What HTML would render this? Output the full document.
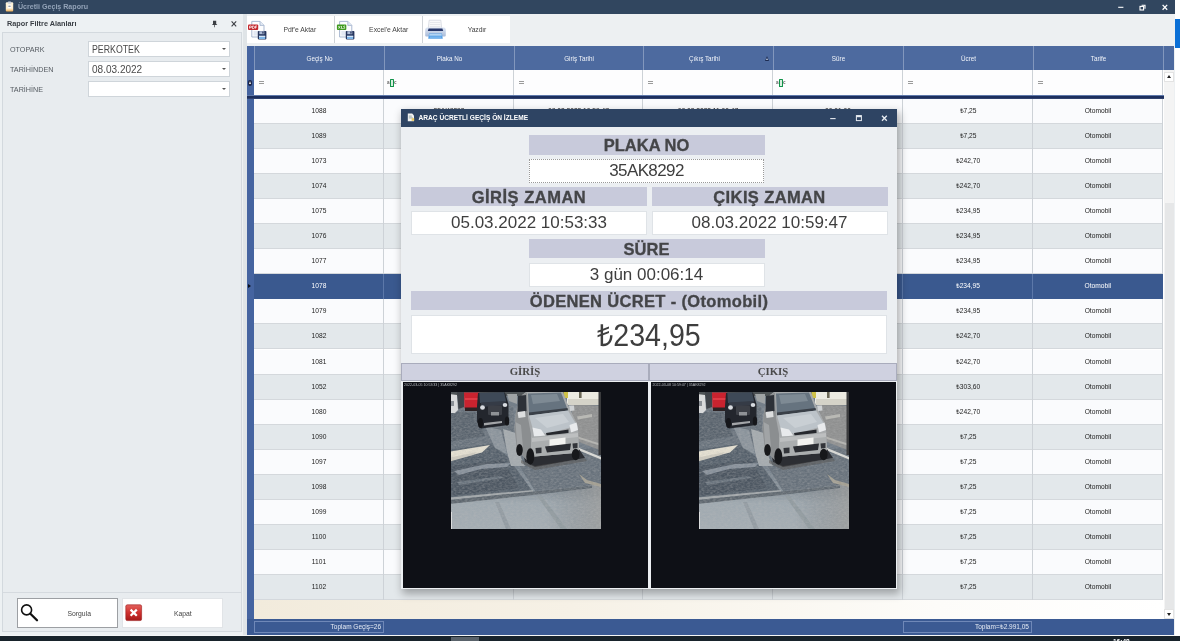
<!DOCTYPE html>
<html><head><meta charset="utf-8"><title>Ücretli Geçiş Raporu</title>
<style>
*{box-sizing:border-box;margin:0;padding:0}
html,body{width:1180px;height:641px;overflow:hidden;background:#fff;font-family:"Liberation Sans",sans-serif;}
body{position:relative;filter:contrast(1)}
.abs{position:absolute}
#win{z-index:0;position:absolute;left:0;top:0;width:1174.6px;height:635.700px;background:#edf0f2;overflow:hidden;border-bottom:1px solid #f4f6f7}
#title{position:absolute;left:0;top:0;width:1175px;height:14px;background:#31465f}
#title .t{position:absolute;left:17.8px;top:2px;font-size:8px;line-height:9px;font-weight:bold;color:#93a3b8;white-space:nowrap;transform:scaleX(.885);transform-origin:0 0}
#rstrip{position:absolute;left:1175px;top:0;width:5px;height:641px;background:#fff}
#rblue{position:absolute;left:1175px;top:19px;width:5px;height:29.300px;background:#0a6fd6}
#taskbar{position:absolute;left:0;top:635.700px;width:1180px;height:6px;background:#18232b;z-index:5}
#taskbar i{position:absolute;left:451px;top:1.2px;width:27.600px;height:5px;background:#59626a}
#taskbar b{position:absolute;left:1113px;top:3.700px;font-size:6.500px;color:#fff;line-height:6px}
/* left panel */
#lp{position:absolute;left:0;top:14px;width:243px;height:621px;background:#edf1f3}
#lp .hd{position:absolute;left:7px;top:5px;font-size:7.3px;font-weight:bold;color:#3a3f45;white-space:nowrap}
#lpin{position:absolute;left:2px;top:17.8px;width:240px;height:600px;background:#e8ecef;border:1px solid #d3d9de}
.lbl{position:absolute;left:10px;font-size:7.2px;color:#555b61;letter-spacing:0;white-space:nowrap}

.cmb span{display:inline-block;transform-origin:0 50%}
.cmb{position:absolute;left:88px;width:142px;height:16px;background:#fff;border:1px solid #cfd5da;font-size:10.5px;color:#4a4a4a;padding-left:3px;line-height:14px;white-space:nowrap}
.cmb:after{content:"";position:absolute;right:3px;top:6px;border:2px solid transparent;border-top:2.5px solid #555;}
#split{position:absolute;left:243px;top:14px;width:4.200px;height:621px;background:#dfe4e7}
/* toolbar */
#tb{position:absolute;left:247px;top:14px;width:928px;height:32px;background:#edf0f2}
.tbtn{position:absolute;top:1.900px;height:27.200px;background:#fff;font-size:6.8px;color:#444;white-space:nowrap}
.tbtn span{position:absolute;top:10px}
/* grid */
#grid{position:absolute;left:247px;top:46px;width:927px;height:588.700px;background:#fff;overflow:hidden}
.ghead{position:absolute;left:0;top:0;width:927px;height:24px;background:#4d6a9f}
.hc{position:absolute;top:0;height:24px;line-height:25px;text-align:center;color:#f1f4f9;font-size:6.300px;border-left:1px solid #8297bd;white-space:nowrap}
.frow{position:absolute;left:7px;top:24px;width:909px;height:25px;background:#fdfdfe}
.eq{position:absolute;top:35.2px;width:5.6px;height:3.2px;border-top:1.1px solid #9b9b9b;border-bottom:1.1px solid #9b9b9b}
.grn{position:absolute;top:33.3px;width:10px;height:7.4px;white-space:nowrap;font-size:0}
.grn i{display:inline-block;vertical-align:top;font-style:normal;font-size:4.6px;line-height:7.4px;color:#666;width:2.5px;text-align:center;font-weight:bold}
.grn b{display:inline-block;vertical-align:top;width:4.600px;height:7.400px;background:#d9efe0;border:1.700px solid #12934a;border-radius:.6px}
.darkline{z-index:2;position:absolute;left:0;top:49px;width:917px;height:3.5px;background:linear-gradient(#5e78aa 0,#5e78aa 30%,#1d2f5e 30%,#1d2f5e 85%,#8a9cc0 100%)}
.row{position:absolute;left:7px;width:909px;height:25.1px;background:#fafbfd;border-bottom:1px solid #d4d8dc;font-size:6.65px;color:#222}
.row.alt{background:#e3e8eb}
.row.sel{background:#3a598f;color:#fff;border-bottom-color:#3a598f;z-index:1}
.row.sel .c+.c{border-left:1px solid #5c78a9;margin-left:-.7px}
.row .c{position:absolute;top:0;height:25px;line-height:24.600px;text-align:center;white-space:nowrap}
.vl{position:absolute;top:24px;width:1px;height:530px;background:#cdd2d7}
.indic{position:absolute;left:0;top:0;width:7px;height:589px;background:#4564a0}
/* footer etc */
#cream{position:absolute;left:7px;top:554px;width:909px;height:19.5px;background:linear-gradient(90deg,#f2ebdc 0,#f6f1e6 35%,#fdfcf9 75%,#fff 100%)}
#foot{position:absolute;left:0;top:573.2px;width:927px;height:15.500px;background:#3b5a93}
.fbox{position:absolute;top:2px;height:12px;border:1px solid #6f88b8;color:#e6ecf5;font-size:6.5px;line-height:10px;text-align:right;padding-right:2px;white-space:nowrap}
#sb{position:absolute;left:917px;top:24px;width:10px;height:549.5px;background:#f4f4f4}
#sb .thumb{position:absolute;left:1px;top:133px;width:9px;height:405.500px;background:#e6e7e8}
#sb .up,#sb .dn{position:absolute;left:0;width:10px;height:10px;background:#fff;border:1px solid #e3e3e3}
#sb .up{top:1.800px}#sb .dn{top:539px}
#sb .up:after{content:"";position:absolute;left:2px;top:0px;border:2.5px solid transparent;border-bottom:3px solid #222}
#sb .dn:after{content:"";position:absolute;left:2px;top:3px;border:2.5px solid transparent;border-top:3px solid #222}
/* bottom-left buttons */
#lsep{position:absolute;left:3px;top:591.5px;width:238px;height:1px;background:#d5dadf}
.bbtn{position:absolute;top:598.3px;height:29.500px;width:101px;background:#fff;border:1px solid #e1e4e7;font-size:6.800px;color:#444}
.bbtn span{position:absolute;top:10.5px}
/* dialog */
#dlg{z-index:10;position:absolute;left:401px;top:109px;width:496px;height:479.5px;background:#eceff2;box-shadow:1.5px 4px 8px 1px rgba(0,0,0,.30)}
#dlg .dt{position:absolute;left:0;top:0;width:496px;height:17.700px;background:#2e4463}
#dlg .dt b{position:absolute;left:17.500px;top:5.200px;font-size:6.6px;color:#fff;white-space:nowrap}
.lab i,.val i{font-style:normal}
.lab{position:absolute;background:#c8cadb;color:#444548;font-weight:bold;text-align:center;white-space:nowrap;height:19.800px;line-height:21px;font-size:16.500px;-webkit-text-stroke:.32px #444548}
.val{position:absolute;background:#fff;border:1px solid #dfe3e7;color:#3e3e3e;text-align:center;white-space:nowrap;height:24px;line-height:22.600px;font-size:17px}
.ih{position:absolute;top:254.300px;height:17.700px;background:#cfd1e0;border:1px solid #a9acbc;font-family:"Liberation Serif",serif;font-weight:bold;font-size:10.800px;color:#4a4a4a;text-align:center;line-height:14.600px}
.ip{position:absolute;top:273px;height:205.5px;background:#0e1016;overflow:hidden}
.ph{position:absolute;top:10px;width:150px;height:137px;overflow:hidden;background:#85878a}
.ph svg{position:absolute;left:-3px;top:-3px;width:156px;height:143px;filter:blur(.65px)}
.ts{position:absolute;left:1.500px;top:1.200px;font-size:3.600px;color:#b9bcc1;white-space:nowrap}

.tsep{position:absolute;top:1.900px;width:1px;height:27.2px;background:#cfd3d7}
.sortarrow{position:absolute;left:517.900px;top:10.100px;width:0;height:0;border:2.900px solid transparent;border-top:0;border-bottom:5px solid #1d2c52}
.sortarrow:after{content:"";position:absolute;left:-1.200px;top:2.200px;border:1.200px solid transparent;border-top:0;border-bottom:2px solid #c9d3e6}

#ind2{display:none}

.rowind{position:absolute;left:1.200px;top:238.200px;width:0;height:0;border:2.500px solid transparent;border-right:0;border-left:3.400px solid #0b0f1c;z-index:3}
.find{position:absolute;left:.600px;top:33.800px;width:4.800px;height:6.200px;border-radius:2.400px;background:#1a2448;z-index:3}
.find:after{content:"";position:absolute;left:1.300px;top:.800px;border:1.100px solid transparent;border-top:0;border-bottom:3.400px solid #fbfbf2}
.indl{position:absolute;left:0;width:7px;height:1px;background:#6d86b6;z-index:3}

</style></head>
<body>
<div id="win">
<div id="title">
  <svg class="abs" style="left:5px;top:1px" width="9" height="11" viewBox="0 0 9 11"><defs><linearGradient id="cg" x1="0" y1="0" x2="0" y2="1"><stop offset="0" stop-color="#fbf3dc"/><stop offset=".7" stop-color="#fdeccb"/><stop offset="1" stop-color="#e9a94e"/></linearGradient></defs><rect x=".8" y="1.2" width="7.4" height="9.3" rx="1" fill="url(#cg)"/><rect x="2.8" y=".4" width="3.4" height="2.4" rx=".8" fill="#c9d0dc"/><rect x="2.6" y="3.6" width="3.8" height="3.6" fill="#fff"/><rect x="3.4" y="4.6" width="2.2" height="1.4" fill="#9aa0a8"/></svg>
  <div class="t">Ücretli Geçiş Raporu</div>
  <svg class="abs" style="left:1114px;top:2px" width="58" height="10" viewBox="0 0 58 10"><g fill="none" stroke="#fff" stroke-width="1.1"><path d="M4.2 5.3h5.2"/><path d="M27.6 3.2h3.4v3.6"/><rect x="26" y="4.4" width="3.6" height="3.6" fill="#31465f"/><path d="M48.6 2.9l4.6 4.8M53.2 2.9l-4.6 4.8" stroke-width="1.3"/></g></svg>
</div>
<div id="lp">
  <div class="hd">Rapor Filtre Alanları</div>
  <svg class="abs" style="left:211px;top:6px" width="27" height="8" viewBox="0 0 27 8"><path d="M2 .8h3.2v3.4h.9v.9H3.9v2.2h-.7V5.1H1.2v-.9H2z" fill="#3c3f44"/><path d="M20.6 1.4l4.6 5M25.2 1.4l-4.6 5" stroke="#3c3f44" stroke-width="1.1" fill="none"/></svg>
  <div id="lpin"></div>
  <div class="lbl" style="top:31px">OTOPARK</div>
  <div class="lbl" style="top:51px">TARİHİNDEN</div>
  <div class="lbl" style="top:71px">TARİHİNE</div>
  <div class="cmb" style="top:26.5px"><span style="transform:scaleX(.835)">PERKOTEK</span></div>
  <div class="cmb" style="top:46.5px"><span style="transform:scaleX(.955)">08.03.2022</span></div>
  <div class="cmb" style="top:66.5px"></div>
</div>
<div id="split"></div>
<div id="tb">
  <div class="tsep" style="left:86.6px"></div><div class="tsep" style="left:175.2px"></div>
  <div class="tbtn" style="left:-.5px;width:87px"><span style="left:37px">Pdf'e Aktar</span>
    <svg class="abs" style="left:.5px;top:3.700px" width="21" height="22" viewBox="0 0 21 22"><path d="M4.8 1.400h8.200l4 4v11.600H4.800z" fill="#fdfdfe" stroke="#9fb0cc" stroke-width=".9"/><path d="M13 1.4v4h4" fill="#e4ebf5" stroke="#9fb0cc" stroke-width=".8"/><rect x="6.5" y="11" width="5" height="4.6" fill="#e3e9f3"/><rect x="1" y="4.6" width="10.2" height="5.4" rx="1" fill="#c3272d"/><path d="M2.6 8.6V6h1.2a.8.8 0 010 1.6H2.6M5.4 6v2.6h.9c1.6 0 1.6-2.6 0-2.6zM8.4 8.600V6h1.600M8.4 7.300h1.200" stroke="#fff" stroke-width=".75" fill="none"/><rect x="10.800" y="11" width="8.600" height="8.400" rx=".8" fill="#26355c"/><rect x="12.300" y="11.200" width="5" height="3" fill="#aebbd6"/><rect x="15.300" y="11.600" width="1.300" height="2" fill="#26355c"/><rect x="12" y="15.800" width="6.200" height="3.200" fill="#7fb6e8"/><rect x="12" y="15.800" width="6.200" height="1" fill="#e9f1fb"/></svg></div>
  <div class="tbtn" style="left:87.6px;width:87.6px"><span style="left:34.500px">Excel'e Aktar</span>
    <svg class="abs" style="left:.500px;top:3.700px" width="21" height="22" viewBox="0 0 21 22"><path d="M4.600 1.400h8.200l4 4v11.600H4.600z" fill="#fdfdfe" stroke="#9fb0cc" stroke-width=".9"/><path d="M12.800 1.400v4h4" fill="#e4ebf5" stroke="#9fb0cc" stroke-width=".8"/><rect x="6.300" y="11" width="5" height="4.600" fill="#e3e9f3"/><rect x="1.900" y="4.600" width="9.400" height="5.400" rx="1" fill="#3f9a1e"/><path d="M3.400 6l1.800 2.600M5.200 6L3.400 8.600M6.500 6v2.600h1.400M10 6.200c-1.600-.6-1.800.9-.8 1.100 1.100.300.800 1.700-.9 1.100" stroke="#fff" stroke-width=".7" fill="none"/><rect x="10.800" y="11" width="8.600" height="8.400" rx=".8" fill="#26355c"/><rect x="12.300" y="11.200" width="5" height="3" fill="#aebbd6"/><rect x="15.300" y="11.600" width="1.300" height="2" fill="#26355c"/><rect x="12" y="15.800" width="6.200" height="3.200" fill="#7fb6e8"/><rect x="12" y="15.800" width="6.200" height="1" fill="#e9f1fb"/></svg></div>
  <div class="tbtn" style="left:176.2px;width:87px"><span style="left:44.6px;letter-spacing:-.12px">Yazdır</span>
    <svg class="abs" style="left:.6px;top:2.8px" width="23" height="22" viewBox="0 0 23 22"><defs><linearGradient id="pg" x1="0" y1="0" x2="0" y2="1"><stop offset="0" stop-color="#dfe7f4"/><stop offset="1" stop-color="#a9bbd8"/></linearGradient></defs><path d="M5.200 1.200h11.600l.9 8H4.300z" fill="#fbfbfc" stroke="#c5cad3" stroke-width=".6"/><path d="M6 3.400h10.200M5.800 5.400h10.600M5.600 7.400h11" stroke="#d3d6dc" stroke-width=".6"/><path d="M3.200 8.400h16.600c1.200 0 2 1 2 2.400v5.400c0 .8-.5 1.300-1.300 1.300H2.500c-.8 0-1.300-.5-1.300-1.300v-5.400c0-1.400.8-2.400 2-2.400z" fill="url(#pg)"/><path d="M4.600 9.400h13.800l.8 2.600H3.800z" fill="#27376a"/><path d="M5 14.600h13l.8 5.200H4.200z" fill="#5aa2e6"/><path d="M5.400 15.200h12.200l.2 1.200H5.200z" fill="#cfe4f8"/><path d="M6 18.200h11" stroke="#8cc2f2" stroke-width=".8"/></svg></div>
</div>
<div id="grid">
<div class="ghead"></div>
<div class="hc" style="left:7px;width:130px">Geçiş No</div>
<div class="hc" style="left:137px;width:130px">Plaka No</div>
<div class="hc" style="left:267px;width:129px">Giriş Tarihi</div>
<div class="hc" style="left:396px;width:130px;padding-right:8px">Çıkış Tarihi</div>
<div class="hc" style="left:526px;width:130px">Süre</div>
<div class="hc" style="left:656px;width:130px">Ücret</div>
<div class="hc" style="left:786px;width:130px">Tarife</div>
<div class="hc" style="left:916px;width:11px"></div>
<div class="sortarrow"></div>
<div class="frow"></div>
<div class="eq" style="left:11.6px"></div>
<div class="grn" style="left:140px"><i>a</i><b></b><i>c</i></div>
<div class="eq" style="left:271.6px"></div>
<div class="eq" style="left:400.6px"></div>
<div class="grn" style="left:529px"><i>a</i><b></b><i>c</i></div>
<div class="eq" style="left:660.6px"></div>
<div class="eq" style="left:790.6px"></div>
<div class="darkline"></div>
<div class="row" style="top:52.5px"><span class="c" style="left:0px;width:130px">1088</span><span class="c" style="left:130px;width:130px">35AK8292</span><span class="c" style="left:260px;width:129px">08.03.2022 10:59:47</span><span class="c" style="left:389px;width:130px">08.03.2022 11:00:47</span><span class="c" style="left:519px;width:130px">00:01:00</span><span class="c" style="left:649px;width:130px">₺7,25</span><span class="c" style="left:779px;width:130px">Otomobil</span></div>
<div class="row alt" style="top:77.6px"><span class="c" style="left:0px;width:130px">1089</span><span class="c" style="left:130px;width:130px">35AK8292</span><span class="c" style="left:260px;width:129px">08.03.2022 10:59:47</span><span class="c" style="left:389px;width:130px">08.03.2022 11:00:47</span><span class="c" style="left:519px;width:130px">00:01:00</span><span class="c" style="left:649px;width:130px">₺7,25</span><span class="c" style="left:779px;width:130px">Otomobil</span></div>
<div class="row" style="top:102.7px"><span class="c" style="left:0px;width:130px">1073</span><span class="c" style="left:130px;width:130px">35AK8292</span><span class="c" style="left:260px;width:129px">08.03.2022 10:59:47</span><span class="c" style="left:389px;width:130px">08.03.2022 11:00:47</span><span class="c" style="left:519px;width:130px">00:01:00</span><span class="c" style="left:649px;width:130px">₺242,70</span><span class="c" style="left:779px;width:130px">Otomobil</span></div>
<div class="row alt" style="top:127.8px"><span class="c" style="left:0px;width:130px">1074</span><span class="c" style="left:130px;width:130px">35AK8292</span><span class="c" style="left:260px;width:129px">08.03.2022 10:59:47</span><span class="c" style="left:389px;width:130px">08.03.2022 11:00:47</span><span class="c" style="left:519px;width:130px">00:01:00</span><span class="c" style="left:649px;width:130px">₺242,70</span><span class="c" style="left:779px;width:130px">Otomobil</span></div>
<div class="row" style="top:152.9px"><span class="c" style="left:0px;width:130px">1075</span><span class="c" style="left:130px;width:130px">35AK8292</span><span class="c" style="left:260px;width:129px">08.03.2022 10:59:47</span><span class="c" style="left:389px;width:130px">08.03.2022 11:00:47</span><span class="c" style="left:519px;width:130px">00:01:00</span><span class="c" style="left:649px;width:130px">₺234,95</span><span class="c" style="left:779px;width:130px">Otomobil</span></div>
<div class="row alt" style="top:178.0px"><span class="c" style="left:0px;width:130px">1076</span><span class="c" style="left:130px;width:130px">35AK8292</span><span class="c" style="left:260px;width:129px">08.03.2022 10:59:47</span><span class="c" style="left:389px;width:130px">08.03.2022 11:00:47</span><span class="c" style="left:519px;width:130px">00:01:00</span><span class="c" style="left:649px;width:130px">₺234,95</span><span class="c" style="left:779px;width:130px">Otomobil</span></div>
<div class="row" style="top:203.1px"><span class="c" style="left:0px;width:130px">1077</span><span class="c" style="left:130px;width:130px">35AK8292</span><span class="c" style="left:260px;width:129px">08.03.2022 10:59:47</span><span class="c" style="left:389px;width:130px">08.03.2022 11:00:47</span><span class="c" style="left:519px;width:130px">00:01:00</span><span class="c" style="left:649px;width:130px">₺234,95</span><span class="c" style="left:779px;width:130px">Otomobil</span></div>
<div class="row alt sel" style="top:228.2px"><span class="c" style="left:0px;width:130px">1078</span><span class="c" style="left:130px;width:130px">35AK8292</span><span class="c" style="left:260px;width:129px">05.03.2022 10:53:33</span><span class="c" style="left:389px;width:130px">08.03.2022 10:59:47</span><span class="c" style="left:519px;width:130px">3 gün 00:06:14</span><span class="c" style="left:649px;width:130px">₺234,95</span><span class="c" style="left:779px;width:130px">Otomobil</span></div>
<div class="row" style="top:253.3px"><span class="c" style="left:0px;width:130px">1079</span><span class="c" style="left:130px;width:130px">35AK8292</span><span class="c" style="left:260px;width:129px">08.03.2022 10:59:47</span><span class="c" style="left:389px;width:130px">08.03.2022 11:00:47</span><span class="c" style="left:519px;width:130px">00:01:00</span><span class="c" style="left:649px;width:130px">₺234,95</span><span class="c" style="left:779px;width:130px">Otomobil</span></div>
<div class="row alt" style="top:278.4px"><span class="c" style="left:0px;width:130px">1082</span><span class="c" style="left:130px;width:130px">35AK8292</span><span class="c" style="left:260px;width:129px">08.03.2022 10:59:47</span><span class="c" style="left:389px;width:130px">08.03.2022 11:00:47</span><span class="c" style="left:519px;width:130px">00:01:00</span><span class="c" style="left:649px;width:130px">₺242,70</span><span class="c" style="left:779px;width:130px">Otomobil</span></div>
<div class="row" style="top:303.5px"><span class="c" style="left:0px;width:130px">1081</span><span class="c" style="left:130px;width:130px">35AK8292</span><span class="c" style="left:260px;width:129px">08.03.2022 10:59:47</span><span class="c" style="left:389px;width:130px">08.03.2022 11:00:47</span><span class="c" style="left:519px;width:130px">00:01:00</span><span class="c" style="left:649px;width:130px">₺242,70</span><span class="c" style="left:779px;width:130px">Otomobil</span></div>
<div class="row alt" style="top:328.6px"><span class="c" style="left:0px;width:130px">1052</span><span class="c" style="left:130px;width:130px">35AK8292</span><span class="c" style="left:260px;width:129px">08.03.2022 10:59:47</span><span class="c" style="left:389px;width:130px">08.03.2022 11:00:47</span><span class="c" style="left:519px;width:130px">00:01:00</span><span class="c" style="left:649px;width:130px">₺303,60</span><span class="c" style="left:779px;width:130px">Otomobil</span></div>
<div class="row" style="top:353.7px"><span class="c" style="left:0px;width:130px">1080</span><span class="c" style="left:130px;width:130px">35AK8292</span><span class="c" style="left:260px;width:129px">08.03.2022 10:59:47</span><span class="c" style="left:389px;width:130px">08.03.2022 11:00:47</span><span class="c" style="left:519px;width:130px">00:01:00</span><span class="c" style="left:649px;width:130px">₺242,70</span><span class="c" style="left:779px;width:130px">Otomobil</span></div>
<div class="row alt" style="top:378.8px"><span class="c" style="left:0px;width:130px">1090</span><span class="c" style="left:130px;width:130px">35AK8292</span><span class="c" style="left:260px;width:129px">08.03.2022 10:59:47</span><span class="c" style="left:389px;width:130px">08.03.2022 11:00:47</span><span class="c" style="left:519px;width:130px">00:01:00</span><span class="c" style="left:649px;width:130px">₺7,25</span><span class="c" style="left:779px;width:130px">Otomobil</span></div>
<div class="row" style="top:403.9px"><span class="c" style="left:0px;width:130px">1097</span><span class="c" style="left:130px;width:130px">35AK8292</span><span class="c" style="left:260px;width:129px">08.03.2022 10:59:47</span><span class="c" style="left:389px;width:130px">08.03.2022 11:00:47</span><span class="c" style="left:519px;width:130px">00:01:00</span><span class="c" style="left:649px;width:130px">₺7,25</span><span class="c" style="left:779px;width:130px">Otomobil</span></div>
<div class="row alt" style="top:429.0px"><span class="c" style="left:0px;width:130px">1098</span><span class="c" style="left:130px;width:130px">35AK8292</span><span class="c" style="left:260px;width:129px">08.03.2022 10:59:47</span><span class="c" style="left:389px;width:130px">08.03.2022 11:00:47</span><span class="c" style="left:519px;width:130px">00:01:00</span><span class="c" style="left:649px;width:130px">₺7,25</span><span class="c" style="left:779px;width:130px">Otomobil</span></div>
<div class="row" style="top:454.1px"><span class="c" style="left:0px;width:130px">1099</span><span class="c" style="left:130px;width:130px">35AK8292</span><span class="c" style="left:260px;width:129px">08.03.2022 10:59:47</span><span class="c" style="left:389px;width:130px">08.03.2022 11:00:47</span><span class="c" style="left:519px;width:130px">00:01:00</span><span class="c" style="left:649px;width:130px">₺7,25</span><span class="c" style="left:779px;width:130px">Otomobil</span></div>
<div class="row alt" style="top:479.2px"><span class="c" style="left:0px;width:130px">1100</span><span class="c" style="left:130px;width:130px">35AK8292</span><span class="c" style="left:260px;width:129px">08.03.2022 10:59:47</span><span class="c" style="left:389px;width:130px">08.03.2022 11:00:47</span><span class="c" style="left:519px;width:130px">00:01:00</span><span class="c" style="left:649px;width:130px">₺7,25</span><span class="c" style="left:779px;width:130px">Otomobil</span></div>
<div class="row" style="top:504.3px"><span class="c" style="left:0px;width:130px">1101</span><span class="c" style="left:130px;width:130px">35AK8292</span><span class="c" style="left:260px;width:129px">08.03.2022 10:59:47</span><span class="c" style="left:389px;width:130px">08.03.2022 11:00:47</span><span class="c" style="left:519px;width:130px">00:01:00</span><span class="c" style="left:649px;width:130px">₺7,25</span><span class="c" style="left:779px;width:130px">Otomobil</span></div>
<div class="row alt" style="top:529.4px"><span class="c" style="left:0px;width:130px">1102</span><span class="c" style="left:130px;width:130px">35AK8292</span><span class="c" style="left:260px;width:129px">08.03.2022 10:59:47</span><span class="c" style="left:389px;width:130px">08.03.2022 11:00:47</span><span class="c" style="left:519px;width:130px">00:01:00</span><span class="c" style="left:649px;width:130px">₺7,25</span><span class="c" style="left:779px;width:130px">Otomobil</span></div>
<div class="vl" style="left:136.3px"></div>
<div class="vl" style="left:266.3px"></div>
<div class="vl" style="left:395.3px"></div>
<div class="vl" style="left:525.3px"></div>
<div class="vl" style="left:655.3px"></div>
<div class="vl" style="left:785.3px"></div>
<div class="vl" style="left:915.3px"></div>
<div id="cream"></div>
<div class="rowind"></div><div class="find"></div>
<div class="indic"></div>
<div id="sb"><div class="thumb"></div><div class="up"></div><div class="dn"></div></div>
<div id="foot"><div class="fbox" style="left:7px;width:130px">Toplam Geçiş=26</div><div class="fbox" style="left:656px;width:129px">Toplam=₺2.991,05</div></div>
</div>  <div id="lsep"></div><div id="ind2"></div>
  <div class="bbtn" style="left:17px;border-color:#9c9fa3"><span style="left:49.500px">Sorgula</span>
    <svg class="abs" style="left:1px;top:3px" width="22" height="22" viewBox="0 0 22 22"><circle cx="7.600" cy="7.900" r="5" fill="none" stroke="#111" stroke-width="1.600"/><path d="M11.400 11.700l6.600 6.600" stroke="#111" stroke-width="2.300" stroke-linecap="round"/></svg></div>
  <div class="bbtn" style="left:122px"><span style="left:51px">Kapat</span>
    <svg class="abs" style="left:2px;top:5px" width="18" height="18" viewBox="0 0 18 18"><defs><linearGradient id="xg" x1="0" y1="0" x2="0" y2="1"><stop offset="0" stop-color="#e2605c"/><stop offset=".5" stop-color="#cf302e"/><stop offset="1" stop-color="#a51818"/></linearGradient></defs><rect x=".8" y=".8" width="15.800" height="15.800" rx="1.500" fill="url(#xg)" stroke="#9a1c1c" stroke-width=".6"/><path d="M5.600 5.600l6.200 6.200M11.800 5.600l-6.200 6.200" stroke="#fff" stroke-width="2.200"/></svg></div>
</div>
<div id="rstrip"></div><div id="rblue"></div>
<div id="taskbar"><i></i><b>16:48</b></div>
<!-- dialog -->
<div id="dlg">
  <div class="dt"><b>ARAÇ ÜCRETLİ GEÇİŞ ÖN İZLEME</b>
    <svg class="abs" style="left:6px;top:4.200px" width="8" height="9" viewBox="0 0 8 9"><path d="M.8.600h4.400l1.800 1.800v5.800H.8z" fill="#f4f4f2"/><rect x="1.800" y="2.600" width="3" height="1" fill="#9aa"/><rect x="1.800" y="4.400" width="4" height="1" fill="#9aa"/><rect x="4.600" y="5.200" width="2.600" height="2.600" fill="#e8c860"/></svg>
    <svg class="abs" style="left:426px;top:3.800px" width="64" height="10" viewBox="0 0 64 10"><g fill="none" stroke="#e6eaf0" stroke-width="1.100"><path d="M3.200 5.600h5.400"/><rect x="29.400" y="2.600" width="5" height="5" stroke-width="1"/><path d="M29.400 3.400h5" stroke-width="1.600"/><path d="M55 2.700l4.800 5M59.800 2.700l-4.800 5" stroke-width="1.300"/></g></svg>
  </div>
  <div class="lab" style="left:127.500px;top:25.800px;width:236px">PLAKA NO</div>
  <div class="val" style="left:128px;top:49.800px;width:235px;border:1px dotted #999;letter-spacing:-.62px">35AK8292</div>
  <div class="lab" style="left:10px;top:77.500px;width:236px;letter-spacing:.5px">GİRİŞ ZAMAN</div>
  <div class="lab" style="left:250.500px;top:77.500px;width:236px;letter-spacing:.38px">ÇIKIŞ ZAMAN</div>
  <div class="val" style="left:10px;top:101.500px;width:236px">05.03.2022 10:53:33</div>
  <div class="val" style="left:250.500px;top:101.500px;width:236px">08.03.2022 10:59:47</div>
  <div class="lab" style="left:127.500px;top:129.600px;width:236px">SÜRE</div>
  <div class="val" style="left:127.500px;top:153.600px;width:236px">3 gün 00:06:14</div>
  <div class="lab" style="left:10px;top:181.600px;width:476px;letter-spacing:.34px">ÖDENEN ÜCRET - (Otomobil)</div>
  <div class="val" style="left:10px;top:205.500px;width:476px;height:39px;line-height:38.600px;font-size:28.600px"><i style="display:inline-block;transform:scaleY(1.07)">₺234,95</i></div>
  <div class="ih" style="left:0;width:248px">GİRİŞ</div>
  <div class="ih" style="left:248px;width:248px">ÇIKIŞ</div>
  <div class="ip" style="left:1.500px;width:245px"><div class="ts">2022-03-05 10:53:33 | 35AK8292</div><div class="ph" style="left:48.3px"><svg viewBox="-3 -3 156 143" preserveAspectRatio="none"><defs>
<linearGradient id="rd1" x1="0" y1="0" x2="0" y2="1"><stop offset="0" stop-color="#76808a"/><stop offset=".5" stop-color="#6f7a85"/><stop offset=".72" stop-color="#8a949c"/><stop offset=".8" stop-color="#9fa9b0"/><stop offset="1" stop-color="#a5adb3"/></linearGradient>
<linearGradient id="rr1" x1="0" y1="0" x2="1" y2="0"><stop offset="0" stop-color="#70777e" stop-opacity="0"/><stop offset="1" stop-color="#9a9a98" stop-opacity=".75"/></linearGradient>
<filter id="nz1" x="0" y="0" width="100%" height="100%"><feTurbulence type="fractalNoise" baseFrequency=".35 .6" numOctaves="2" seed="7"/><feColorMatrix type="matrix" values="0 0 0 0 .5  0 0 0 0 .5  0 0 0 0 .5  .9 .9 .9 0 -1.05"/></filter></defs>
 <rect x="-3" y="-3" width="156" height="143" fill="url(#rd1)"/>
 <!-- right side gets lighter/warmer -->
 <rect x="95" y="88" width="58" height="52" fill="url(#rr1)"/>
 <path d="M60 60 L153 56 L153 92 L84 99 Z" fill="#67717b"/>
 <!-- upper-left road (medium) -->
 <path d="M-3 14 L62 14 L64 40 L50 60 L-3 62 Z" fill="#68727c"/>
 <path d="M-3 20 L24 20 L34 44 L-3 50 Z" fill="#59636d"/>
 <!-- dark asphalt patch -->
 <path d="M-3 58 L40 52 L56 64 L82 100 L-3 108 Z" fill="#55606b"/>
 <path d="M-3 74 L52 68 L68 96 L-3 104 Z" fill="#4c5661"/>
 <path d="M3 79 L36 72 L60 71 L56 75 L30 77 L8 83 Z" fill="#87909a"/>
 <path d="M6 90 L50 84 L52 86 L8 93 Z" fill="#69737d"/>
 <!-- sunlit streak down the centre -->
 <path d="M52 37 L65 41 L70 66 L74 74 L60 74 L56 60 Z" fill="#a4aaae"/>
 <path d="M34 34 L50 38 L56 62 L44 56 Z" fill="#8a939b"/>
 <!-- light patch left -->
 <path d="M-3 60 L39 53 L31 60.500 L-3 69 Z" fill="#e6e1d2"/>
 <path d="M-3 66 L26 60 L22 63 L-3 70 Z" fill="#cfcbbf"/>
 <!-- lower band: light line, dark stripe -->
 <path d="M-3 105.500 L82 98 L82 100 L-3 108 Z" fill="#a3a8ab"/>
 <path d="M-3 108 L82 99.500 L141 93.500 L141 96 L82 103 L-3 112 Z" fill="#5d666e"/>
 <!-- diagonal subtle lines in lower area -->
 <path d="M44 110 L48 110 L60 137 L55 137 Z" fill="#929ba2"/>
 <path d="M86 104 L90 103 L116 137 L110 137 Z" fill="#909a9f"/>
 <path d="M128 82 L136 88 L150 92 L150 95 L134 91 Z" fill="#a39f92"/>
 <!-- right pavement + kerb -->
 <path d="M120 12 L153 14 L153 60 L128 50 L122 30 Z" fill="#8e8f8f"/>
 <path d="M126 24.500 L141 22 L141 25 L127 27.500 Z" fill="#b9b9b4"/>
 <path d="M127 44.500 L150 52 L150 54 L127 46.500 Z" fill="#b4b4b0"/>
 <path d="M127 55.500 L150 65 L150 67.500 L127 58 Z" fill="#dcdcd8"/>
 <rect x="-3" y="14" width="156" height="126" filter="url(#nz1)" opacity=".38"/>
 <!-- top background -->
 <rect x="-3" y="-3" width="156" height="7" fill="#4e5356"/>
 <path d="M56 2 L66 2 L66 12 L58 9 Z" fill="#9fa3a5"/>
 <rect x="116" y="-3" width="37" height="15.500" fill="#ecebe2"/>
 <rect x="117" y="7" width="36" height="6" fill="#d5d3c8"/>
 <rect x="112.500" y="-3" width="4.500" height="9" fill="#cfc148"/>
 <rect x="128" y="-3" width="2.600" height="9" fill="#6b6856"/>
 <rect x="147.500" y="-3" width="5.500" height="66" fill="#3a3b3d"/>
 <!-- far-left cars -->
 <path d="M-3 2 L6 3 L7 18 L4 21 L-3 21 Z" fill="#d9dadb"/>
 <rect x="-3" y="9" width="6" height="5" fill="#8b9096"/>
 <path d="M6 0 L13 0 L13 15 L7.500 17 Z" fill="#3f4349"/>
 <!-- red car -->
 <path d="M13 .500 L28 .500 L28.500 16 L13.500 16.500 Z" fill="#c9232f"/>
 <rect x="14" y="6" width="13" height="2" fill="#de3b45"/>
 <rect x="14" y="15.500" width="14" height="3.500" fill="#2c2224"/>
 <!-- dark SUV -->
 <path d="M27 1 L54 .500 L57.500 12 L57.500 33 L30 36.500 L26 30 L26 14 Z" fill="#23262d"/>
 <path d="M28.500 1 L53 .500 L55 9.500 L29 11 Z" fill="#46526280"/>
 <path d="M28.500 1 L53 .500 L55 9.500 L29 11 Z" fill="#3e4957"/>
 <path d="M30 10.500 L54 9 L55.500 13 L30 15 Z" fill="#353b46"/>
 <rect x="37" y="13.500" width="14" height="9.500" rx="1" fill="#3c3f46"/>
 <rect x="40" y="20" width="8" height="3.500" fill="#8f9296"/>
 <ellipse cx="31.500" cy="15.500" rx="2.400" ry="2.200" fill="#d8dbe0"/>
 <ellipse cx="54" cy="13" rx="2.300" ry="2.100" fill="#d8dbe0"/>
 <path d="M33 31 L51 29 L51 31 L33 33.500 Z" fill="#a3a5a8"/>
 <ellipse cx="29.500" cy="31" rx="2.600" ry="5" fill="#15161a"/>
 <ellipse cx="56" cy="29" rx="2.200" ry="4.500" fill="#15161a"/>
 <!-- shadow under silver car -->
 <path d="M72 60 L128 57 L134 66 L84 75 L74 70 Z" fill="#2c2e33"/>
 <path d="M70 68 L84 74 L134 66 L136 69 L84 78 L70 71 Z" fill="#55545280"/>
 <!-- silver car body -->
 <path d="M71 3 L75 0 L112 0 L117 13 L127 34 L128 58 L124 61 L84 64.500 L78 70 L66 58 L63.500 36 L65 20 Z" fill="#a7aaac"/>
 <!-- side (darker) -->
 <path d="M71 3 L76 .500 L77 26 L80 42 L80 66 L77 69 L66 58 L63.500 36 L65 20 Z" fill="#8b8e90"/>
 <path d="M67 4 L75 3 L75.500 19 L66.500 21 Z" fill="#2d3138"/>
 <path d="M64.500 30 L70 33 L72 56 L66 52 Z" fill="#a1a4a6"/>
 <!-- windshield -->
 <path d="M77 1.500 L110 .500 L117 18.500 L78 23.500 Z" fill="#66737f"/>
 <path d="M80 3 L106 2 L109 9 L82 12 Z" fill="#7e8a94"/>
 <path d="M78 20.500 L116.500 16 L117 18.500 L78 23.500 Z" fill="#3a4048"/>
 <!-- hood -->
 <path d="M78 23.500 L117 18.500 L125 32 L119 35.500 L96 42 L82 37.500 Z" fill="#bcc3c9"/>
 <path d="M84 26 L112 22 L118 30 L96 36 Z" fill="#c9cfd4"/>
 <!-- headlights -->
 <path d="M81.500 35.500 L90 37.500 L95 44.500 L83 44.500 Z" fill="#e8eaec"/>
 <path d="M118.500 33 L125.500 30.500 L127 38 L120 40.500 Z" fill="#e8eaec"/>
 <!-- grille -->
 <path d="M95 41 L117.500 37.500 L117.500 41.500 L96 45 Z" fill="#26282d"/>
 <!-- bumper -->
 <path d="M80 45 L127 40 L128 58 L124 61 L84 64.500 L80 60 Z" fill="#abaeaf"/>
 <path d="M81 46 L127 41 L127 45 L81 50 Z" fill="#bdbfc0"/>
 <path d="M98.500 47.500 L114.500 45.500 L114.500 52.500 L98.500 54.500 Z" fill="#f3f3f0"/>
 <path d="M94 54.500 L120 51.500 L119 58 L96 60.500 Z" fill="#2b2d32"/>
 <path d="M84.500 56 L90.500 55.500 L90.500 61 L85 61.500 Z" fill="#33353a"/>
 <path d="M121.500 51.500 L126.500 51 L126.500 56 L122 56.500 Z" fill="#33353a"/>
 <!-- wheels -->
 <ellipse cx="68.500" cy="58" rx="3.300" ry="6" fill="#17181b"/>
 <ellipse cx="79.300" cy="64.500" rx="4" ry="8.300" fill="#17181b"/>
 <ellipse cx="124.700" cy="62.500" rx="3.900" ry="5.800" fill="#17181b"/>
 <!-- mirrors -->
 <path d="M66.500 20 L74 19 L74.500 25 L67.500 26 Z" fill="#dcdedf"/>
 <path d="M118 13.500 L123 13.500 L123.500 18.500 L119 19 Z" fill="#cfd2d4"/>
 <rect x="0" y="120" width=".8" height="17" fill="#e9e9e9"/>
</svg>
</div></div>
  <div class="ip" style="left:250px;width:244.500px"><div class="ts">2022-03-08 10:59:47 | 35AK8292</div><div class="ph" style="left:47.5px"><svg viewBox="-3 -3 156 143" preserveAspectRatio="none"><defs>
<linearGradient id="rd2" x1="0" y1="0" x2="0" y2="1"><stop offset="0" stop-color="#76808a"/><stop offset=".5" stop-color="#6f7a85"/><stop offset=".72" stop-color="#8a949c"/><stop offset=".8" stop-color="#9fa9b0"/><stop offset="1" stop-color="#a5adb3"/></linearGradient>
<linearGradient id="rr2" x1="0" y1="0" x2="1" y2="0"><stop offset="0" stop-color="#70777e" stop-opacity="0"/><stop offset="1" stop-color="#9a9a98" stop-opacity=".75"/></linearGradient>
<filter id="nz2" x="0" y="0" width="100%" height="100%"><feTurbulence type="fractalNoise" baseFrequency=".35 .6" numOctaves="2" seed="7"/><feColorMatrix type="matrix" values="0 0 0 0 .5  0 0 0 0 .5  0 0 0 0 .5  .9 .9 .9 0 -1.05"/></filter></defs>
 <rect x="-3" y="-3" width="156" height="143" fill="url(#rd2)"/>
 <!-- right side gets lighter/warmer -->
 <rect x="95" y="88" width="58" height="52" fill="url(#rr2)"/>
 <path d="M60 60 L153 56 L153 92 L84 99 Z" fill="#67717b"/>
 <!-- upper-left road (medium) -->
 <path d="M-3 14 L62 14 L64 40 L50 60 L-3 62 Z" fill="#68727c"/>
 <path d="M-3 20 L24 20 L34 44 L-3 50 Z" fill="#59636d"/>
 <!-- dark asphalt patch -->
 <path d="M-3 58 L40 52 L56 64 L82 100 L-3 108 Z" fill="#55606b"/>
 <path d="M-3 74 L52 68 L68 96 L-3 104 Z" fill="#4c5661"/>
 <path d="M3 79 L36 72 L60 71 L56 75 L30 77 L8 83 Z" fill="#87909a"/>
 <path d="M6 90 L50 84 L52 86 L8 93 Z" fill="#69737d"/>
 <!-- sunlit streak down the centre -->
 <path d="M52 37 L65 41 L70 66 L74 74 L60 74 L56 60 Z" fill="#a4aaae"/>
 <path d="M34 34 L50 38 L56 62 L44 56 Z" fill="#8a939b"/>
 <!-- light patch left -->
 <path d="M-3 60 L39 53 L31 60.500 L-3 69 Z" fill="#e6e1d2"/>
 <path d="M-3 66 L26 60 L22 63 L-3 70 Z" fill="#cfcbbf"/>
 <!-- lower band: light line, dark stripe -->
 <path d="M-3 105.500 L82 98 L82 100 L-3 108 Z" fill="#a3a8ab"/>
 <path d="M-3 108 L82 99.500 L141 93.500 L141 96 L82 103 L-3 112 Z" fill="#5d666e"/>
 <!-- diagonal subtle lines in lower area -->
 <path d="M44 110 L48 110 L60 137 L55 137 Z" fill="#929ba2"/>
 <path d="M86 104 L90 103 L116 137 L110 137 Z" fill="#909a9f"/>
 <path d="M128 82 L136 88 L150 92 L150 95 L134 91 Z" fill="#a39f92"/>
 <!-- right pavement + kerb -->
 <path d="M120 12 L153 14 L153 60 L128 50 L122 30 Z" fill="#8e8f8f"/>
 <path d="M126 24.500 L141 22 L141 25 L127 27.500 Z" fill="#b9b9b4"/>
 <path d="M127 44.500 L150 52 L150 54 L127 46.500 Z" fill="#b4b4b0"/>
 <path d="M127 55.500 L150 65 L150 67.500 L127 58 Z" fill="#dcdcd8"/>
 <rect x="-3" y="14" width="156" height="126" filter="url(#nz2)" opacity=".38"/>
 <!-- top background -->
 <rect x="-3" y="-3" width="156" height="7" fill="#4e5356"/>
 <path d="M56 2 L66 2 L66 12 L58 9 Z" fill="#9fa3a5"/>
 <rect x="116" y="-3" width="37" height="15.500" fill="#ecebe2"/>
 <rect x="117" y="7" width="36" height="6" fill="#d5d3c8"/>
 <rect x="112.500" y="-3" width="4.500" height="9" fill="#cfc148"/>
 <rect x="128" y="-3" width="2.600" height="9" fill="#6b6856"/>
 <rect x="147.500" y="-3" width="5.500" height="66" fill="#3a3b3d"/>
 <!-- far-left cars -->
 <path d="M-3 2 L6 3 L7 18 L4 21 L-3 21 Z" fill="#d9dadb"/>
 <rect x="-3" y="9" width="6" height="5" fill="#8b9096"/>
 <path d="M6 0 L13 0 L13 15 L7.500 17 Z" fill="#3f4349"/>
 <!-- red car -->
 <path d="M13 .500 L28 .500 L28.500 16 L13.500 16.500 Z" fill="#c9232f"/>
 <rect x="14" y="6" width="13" height="2" fill="#de3b45"/>
 <rect x="14" y="15.500" width="14" height="3.500" fill="#2c2224"/>
 <!-- dark SUV -->
 <path d="M27 1 L54 .500 L57.500 12 L57.500 33 L30 36.500 L26 30 L26 14 Z" fill="#23262d"/>
 <path d="M28.500 1 L53 .500 L55 9.500 L29 11 Z" fill="#46526280"/>
 <path d="M28.500 1 L53 .500 L55 9.500 L29 11 Z" fill="#3e4957"/>
 <path d="M30 10.500 L54 9 L55.500 13 L30 15 Z" fill="#353b46"/>
 <rect x="37" y="13.500" width="14" height="9.500" rx="1" fill="#3c3f46"/>
 <rect x="40" y="20" width="8" height="3.500" fill="#8f9296"/>
 <ellipse cx="31.500" cy="15.500" rx="2.400" ry="2.200" fill="#d8dbe0"/>
 <ellipse cx="54" cy="13" rx="2.300" ry="2.100" fill="#d8dbe0"/>
 <path d="M33 31 L51 29 L51 31 L33 33.500 Z" fill="#a3a5a8"/>
 <ellipse cx="29.500" cy="31" rx="2.600" ry="5" fill="#15161a"/>
 <ellipse cx="56" cy="29" rx="2.200" ry="4.500" fill="#15161a"/>
 <!-- shadow under silver car -->
 <path d="M72 60 L128 57 L134 66 L84 75 L74 70 Z" fill="#2c2e33"/>
 <path d="M70 68 L84 74 L134 66 L136 69 L84 78 L70 71 Z" fill="#55545280"/>
 <!-- silver car body -->
 <path d="M71 3 L75 0 L112 0 L117 13 L127 34 L128 58 L124 61 L84 64.500 L78 70 L66 58 L63.500 36 L65 20 Z" fill="#a7aaac"/>
 <!-- side (darker) -->
 <path d="M71 3 L76 .500 L77 26 L80 42 L80 66 L77 69 L66 58 L63.500 36 L65 20 Z" fill="#8b8e90"/>
 <path d="M67 4 L75 3 L75.500 19 L66.500 21 Z" fill="#2d3138"/>
 <path d="M64.500 30 L70 33 L72 56 L66 52 Z" fill="#a1a4a6"/>
 <!-- windshield -->
 <path d="M77 1.500 L110 .500 L117 18.500 L78 23.500 Z" fill="#66737f"/>
 <path d="M80 3 L106 2 L109 9 L82 12 Z" fill="#7e8a94"/>
 <path d="M78 20.500 L116.500 16 L117 18.500 L78 23.500 Z" fill="#3a4048"/>
 <!-- hood -->
 <path d="M78 23.500 L117 18.500 L125 32 L119 35.500 L96 42 L82 37.500 Z" fill="#bcc3c9"/>
 <path d="M84 26 L112 22 L118 30 L96 36 Z" fill="#c9cfd4"/>
 <!-- headlights -->
 <path d="M81.500 35.500 L90 37.500 L95 44.500 L83 44.500 Z" fill="#e8eaec"/>
 <path d="M118.500 33 L125.500 30.500 L127 38 L120 40.500 Z" fill="#e8eaec"/>
 <!-- grille -->
 <path d="M95 41 L117.500 37.500 L117.500 41.500 L96 45 Z" fill="#26282d"/>
 <!-- bumper -->
 <path d="M80 45 L127 40 L128 58 L124 61 L84 64.500 L80 60 Z" fill="#abaeaf"/>
 <path d="M81 46 L127 41 L127 45 L81 50 Z" fill="#bdbfc0"/>
 <path d="M98.500 47.500 L114.500 45.500 L114.500 52.500 L98.500 54.500 Z" fill="#f3f3f0"/>
 <path d="M94 54.500 L120 51.500 L119 58 L96 60.500 Z" fill="#2b2d32"/>
 <path d="M84.500 56 L90.500 55.500 L90.500 61 L85 61.500 Z" fill="#33353a"/>
 <path d="M121.500 51.500 L126.500 51 L126.500 56 L122 56.500 Z" fill="#33353a"/>
 <!-- wheels -->
 <ellipse cx="68.500" cy="58" rx="3.300" ry="6" fill="#17181b"/>
 <ellipse cx="79.300" cy="64.500" rx="4" ry="8.300" fill="#17181b"/>
 <ellipse cx="124.700" cy="62.500" rx="3.900" ry="5.800" fill="#17181b"/>
 <!-- mirrors -->
 <path d="M66.500 20 L74 19 L74.500 25 L67.500 26 Z" fill="#dcdedf"/>
 <path d="M118 13.500 L123 13.500 L123.500 18.500 L119 19 Z" fill="#cfd2d4"/>
 <rect x="0" y="120" width=".8" height="17" fill="#e9e9e9"/>
</svg>
</div></div>
</div>

</body></html>
